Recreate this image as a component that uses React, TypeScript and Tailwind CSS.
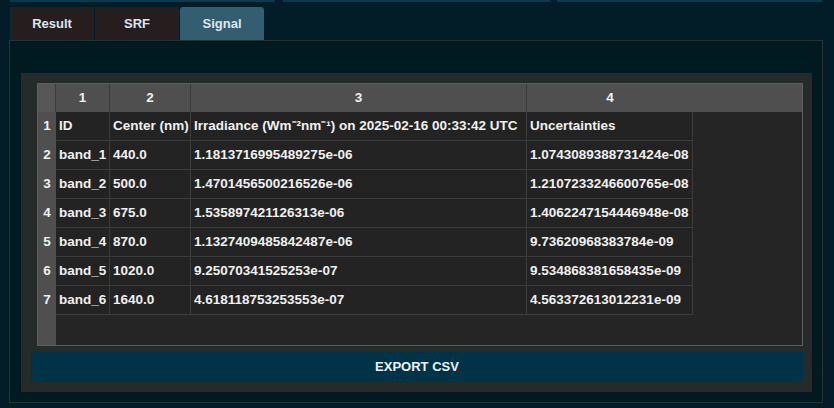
import React from "react";

const rows = [
  ["ID", "Center (nm)", "Irradiance (Wm⁻²nm⁻¹) on 2025-02-16 00:33:42 UTC", "Uncertainties"],
  ["band_1", "440.0", "1.1813716995489275e-06", "1.0743089388731424e-08"],
  ["band_2", "500.0", "1.4701456500216526e-06", "1.2107233246600765e-08"],
  ["band_3", "675.0", "1.535897421126313e-06", "1.4062247154446948e-08"],
  ["band_4", "870.0", "1.1327409485842487e-06", "9.73620968383784e-09"],
  ["band_5", "1020.0", "9.25070341525253e-07", "9.534868381658435e-09"],
  ["band_6", "1640.0", "4.618118753253553e-07", "4.563372613012231e-09"],
];

const colW = ["w-[54px]", "w-[81px]", "w-[336px]", "w-[166px]"];

function Tab({ label, active }: { label: string; active?: boolean }) {
  return (
    <div
      className={`flex h-[33px] items-center justify-center text-[13px] font-bold text-[#dde6ee] ${
        active
          ? "w-[84px] rounded-t-[3px] bg-[#335e70]"
          : "w-[84px] border border-b-0 border-[#0f2633] bg-[#261d1e]"
      }`}
    >
      {label}
    </div>
  );
}

function DataTable() {
  return (
    <div className="flex h-[263px] w-[766px] border border-[#5e5e5e] bg-[#252525]">
      <div className="flex w-[18px] flex-col bg-[#4f4f4f]">
        <div className="h-[28px] border-r border-[#3c3c3c] bg-[#575757]" />
        {rows.map((_, i) => (
          <div key={i} className="flex h-[29px] items-center justify-center text-[13.5px] font-bold text-[#f0f0f0]">
            {i + 1}
          </div>
        ))}
      </div>
      <div className="flex flex-1 flex-col">
        <div className="flex h-[28px] bg-[#4f4f4f]">
          {colW.map((w, i) => (
            <div
              key={i}
              className={`${w} flex items-center justify-center border-r border-[#3c3c3c] text-[13.5px] font-bold text-[#f0f0f0] last:border-r-0`}
            >
              {i + 1}
            </div>
          ))}
        </div>
        {rows.map((r, i) => (
          <div key={i} className="flex h-[29px]">
            {r.map((c, j) => (
              <div
                key={j}
                className={`${colW[j]} flex items-center whitespace-nowrap border-r border-b border-[#3c3c3c] bg-[#232323] pl-[3px] text-[13.5px] font-bold text-[#f0f0f0]`}
              >
                {c}
              </div>
            ))}
          </div>
        ))}
      </div>
    </div>
  );
}

export default function App() {
  return (
    <div
      className="h-[408px] w-[834px] overflow-hidden bg-[#021d27]"
      style={{ fontFamily: '"Liberation Sans", Arial, sans-serif' }}
    >
      <div className="flex h-[2px] pl-[10px]">
        <div className="w-[265px] bg-[#0a3a50]" />
        <div className="ml-[8px] w-[267px] bg-[#0a3a50]" />
        <div className="ml-[7px] w-[265px] bg-[#0a3a50]" />
      </div>
      <div className="mt-[5px] flex gap-px pl-[10px]">
        <Tab label="Result" />
        <Tab label="SRF" />
        <Tab label="Signal" active />
      </div>
      <div className="ml-[9px] h-[363px] w-[814px] border border-[#26332f] bg-[#001a22] px-[10px] pt-[9px]">
        <div className="flex h-[343px] w-[793px] flex-col border border-[#08171d] pt-[22px]">
          <div className="flex flex-1 flex-col bg-[#262b2a] pt-[10px] pl-[10px] pb-[10px]">
            <div className="pl-[6px]">
              <DataTable />
            </div>
            <button className="mt-[6px] flex h-[30px] w-[772px] items-center justify-center bg-[#013348] text-[13px] font-bold text-[#eef2f4]">
              EXPORT CSV
            </button>
          </div>
        </div>
      </div>
    </div>
  );
}
